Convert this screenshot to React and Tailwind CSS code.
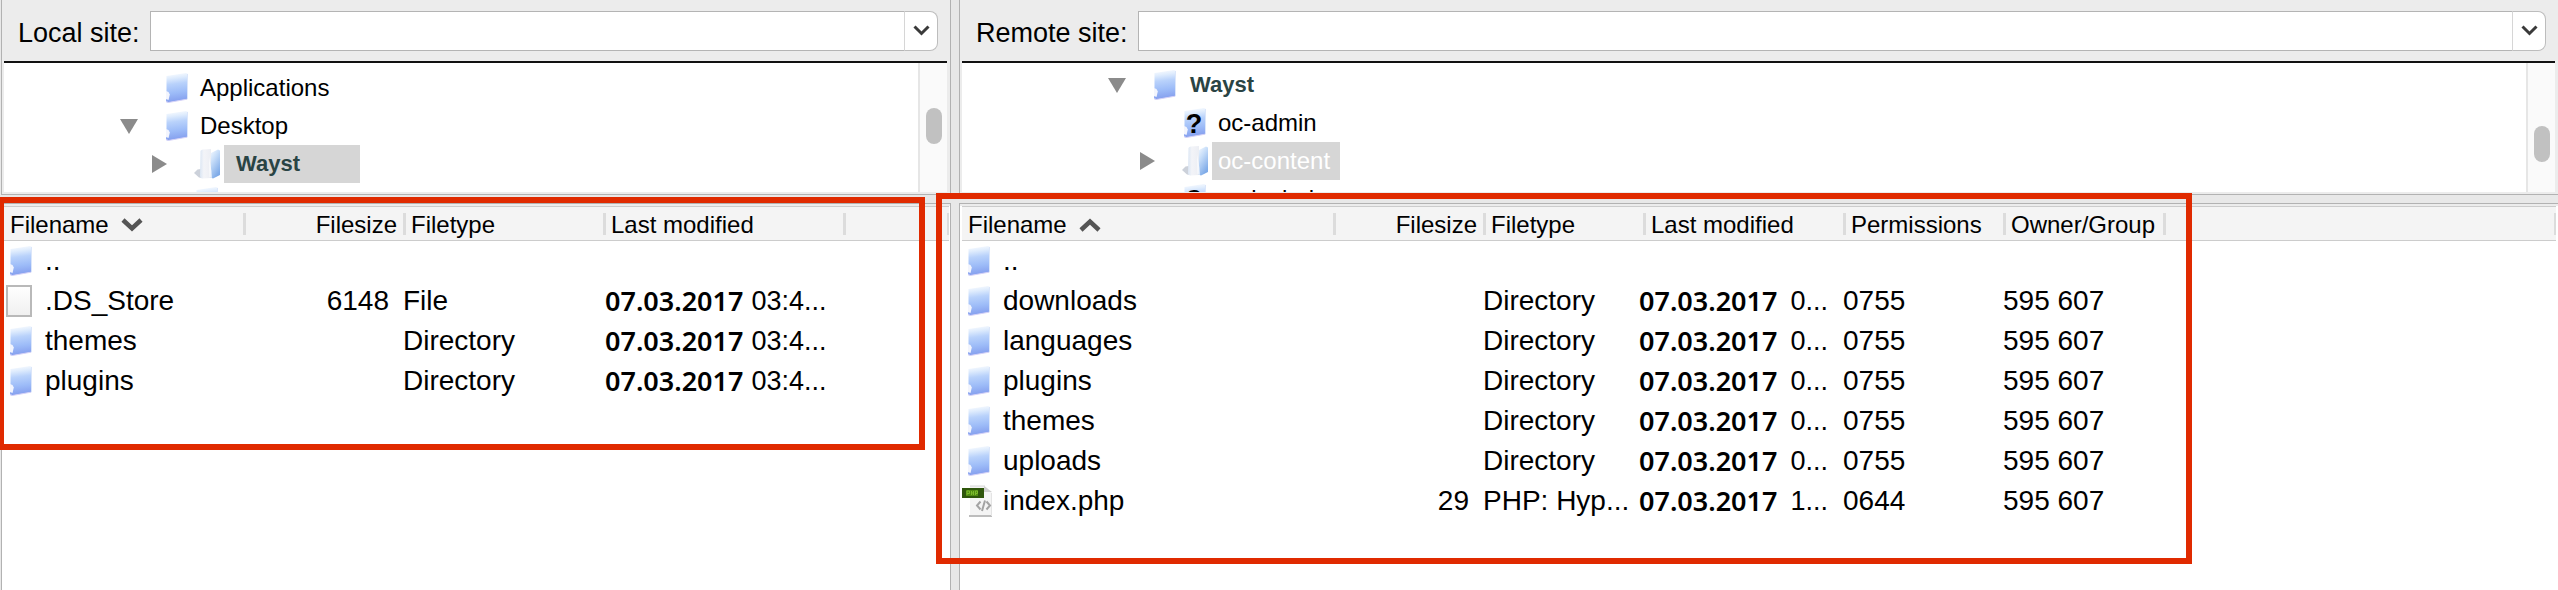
import React from "react";

function Gradients() {
  return (
    <svg className="absolute h-0 w-0" aria-hidden="true">
      <defs>
        <linearGradient id="folder" x1="0" y1="0" x2="0.1" y2="1">
          <stop offset="0" stopColor="#ffffff" />
          <stop offset="0.2" stopColor="#dfecfd" />
          <stop offset="0.4" stopColor="#b9d2fb" />
          <stop offset="0.7" stopColor="#9dbcf8" />
          <stop offset="1" stopColor="#859fee" />
        </linearGradient>
        <linearGradient id="openPage" x1="0" y1="0" x2="1" y2="0">
          <stop offset="0" stopColor="#dbe6f4" />
          <stop offset="0.35" stopColor="#f3f4f8" />
          <stop offset="1" stopColor="#eceef4" />
        </linearGradient>
        <linearGradient id="openCover" x1="0" y1="0" x2="0.5" y2="1">
          <stop offset="0" stopColor="#f6faff" />
          <stop offset="0.4" stopColor="#c8def9" />
          <stop offset="1" stopColor="#7fabe8" />
        </linearGradient>
        <linearGradient id="blankFile" x1="0" y1="0" x2="0" y2="1">
          <stop offset="0" stopColor="#ffffff" />
          <stop offset="1" stopColor="#f0f0f0" />
        </linearGradient>
      </defs>
    </svg>
  );
}

function FolderShape() {
  return (
    <>
      <path d="M0.5 3 L20 0 L22 1 V26 L2 29.5 L0 29 L0.5 17 Z" fill="url(#folder)" />
      <path d="M0 18 L2.5 19 L3.8 21.5 L2.5 27 L0 26 Z" fill="#f3f5fd" />
      <path d="M0 28.5 L2.5 29.5 L21 26.2" fill="none" stroke="#d5d2f7" strokeWidth="1" />
      <path d="M21.5 1 V26" stroke="#dbe6fa" strokeWidth="1" />
    </>
  );
}

function FolderIcon() {
  return (
    <svg className="h-[30px] w-[22px] shrink-0" viewBox="0 0 22 30" aria-hidden="true">
      <FolderShape />
    </svg>
  );
}

function UnknownFolderIcon() {
  return (
    <svg className="h-[30px] w-[22px] shrink-0" viewBox="0 0 22 30" aria-hidden="true">
      <FolderShape />
      <text x="10" y="25" textAnchor="middle" fontSize="27" fontWeight="700" fontFamily="Liberation Sans, sans-serif">
        ?
      </text>
    </svg>
  );
}

function OpenFolderIcon() {
  return (
    <svg className="-ml-[2px] h-[30px] w-[26px] shrink-0" viewBox="0 0 26 30" aria-hidden="true">
      <path d="M0 24 L3.5 20.5 L7 20 L8 29 L5 28.5 Z" fill="#ccd1da" />
      <path d="M6.5 2 Q7 0.5 9 0.5 L17 0 V29 L8 29.5 Q6 29 6 27 Z" fill="url(#openPage)" />
      <path d="M17 4 L24 0.5 L26 1.5 V26 L19 29.5 L16.5 28.5 Z" fill="url(#openCover)" />
      <path d="M15 8 L17.5 22 L18 29 L15.5 28 Z" fill="#ffffff" opacity="0.7" />
    </svg>
  );
}

function BlankFileIcon() {
  return (
    <svg className="h-[32px] w-[26px] shrink-0" viewBox="0 0 26 32" aria-hidden="true">
      <rect x="1" y="1" width="24" height="30" fill="url(#blankFile)" stroke="#b9b9b9" strokeWidth="2" />
    </svg>
  );
}

function PhpFileIcon() {
  return (
    <svg className="h-[32px] w-[31px] shrink-0" viewBox="0 0 31 32" aria-hidden="true">
      <path d="M8 1 H23 L30 8 V31 H8 Z" fill="#f4f4f4" />
      <path d="M8 1 H23" stroke="#d8d8d8" />
      <path d="M22 1 V7 H30 Z" fill="#d0d0d0" />
      <path d="M7 31 H30" stroke="#bdbdbd" strokeWidth="2" />
      <path d="M29.5 8 V31" stroke="#e4e4e4" />
      <rect x="0" y="3" width="22" height="10" fill="#2f560c" />
      <rect x="4" y="5" width="12" height="6" fill="#4f8a12" />
      <path d="M5 10 V6 H7.500 V8.500 H5 M9.500 6 V10 M11.500 6 V10 M9.500 8 H11.500 M13.500 10 V6 H15.500 V8.500 H13.500" fill="none" stroke="#7cba2c" />
      <path
        d="M18.500 16.500 L15 20.500 L18.500 24.500 M24.500 16.500 L28 20.500 L24.500 24.500 M23 15.500 L20 26"
        fill="none"
        stroke="#a3a3a3"
        strokeWidth="2"
      />
    </svg>
  );
}

const icons = {
  folder: { Icon: FolderIcon, pad: "pl-[6px]" },
  file: { Icon: BlankFileIcon, pad: "pl-[2px]" },
  php: { Icon: PhpFileIcon, pad: "pl-0" },
};

const treeIcons = { folder: FolderIcon, unknown: UnknownFolderIcon, open: OpenFolderIcon };

function Toggle({ state, name }) {
  if (!state) return null;
  return (
    <button type="button" aria-label={`Toggle ${name}`} className="flex h-[18px] w-[20px] items-center">
      {state === "down" ? (
        <svg className="h-[15px] w-[18px]" viewBox="0 0 18 15" aria-hidden="true">
          <path d="M0 0 H18 L9 15 Z" fill="#8b8b8b" />
        </svg>
      ) : (
        <svg className="ml-[2px] h-[18px] w-[15px]" viewBox="0 0 15 18" aria-hidden="true">
          <path d="M0 0 V18 L15 9 Z" fill="#8b8b8b" />
        </svg>
      )}
    </button>
  );
}

function TreeRow({ node }) {
  const Icon = treeIcons[node.icon];
  return (
    <li className={`flex h-[38px] shrink-0 items-center ${node.indent}`}>
      <div className="flex w-[46px] shrink-0 items-center">
        <Toggle state={node.toggle} name={node.name} />
      </div>
      <div className="flex w-[28px] shrink-0 items-center">
        <Icon />
      </div>
      {node.name && (
        <span className={`h-[38px] whitespace-nowrap leading-[38px] ${node.label}`}>{node.name}</span>
      )}
    </li>
  );
}

function SiteBar({ id, label }) {
  return (
    <div className="flex h-[61px] items-center pl-[14px] pr-[9px]">
      <label htmlFor={id} className="mr-[10px] whitespace-nowrap pt-[5px] text-[27px] leading-[32px]">
        {label}
      </label>
      <input
        id={id}
        type="text"
        className="h-[40px] min-w-0 flex-1 border border-[#b4b4b4] bg-white px-2 text-[24px] outline-none"
      />
      <button
        type="button"
        aria-label={`${label} history`}
        className="-ml-px flex h-[40px] w-[34px] items-center justify-center rounded-r-[8px] border border-[#bdbdbd] border-l-[#d6d6d6] bg-white"
      >
        <svg className="h-[11px] w-[17px]" viewBox="0 0 17 11" aria-hidden="true">
          <path d="M1.5 1.5 L8.5 8.5 L15.5 1.5" fill="none" stroke="#3a3a3a" strokeWidth="3" />
        </svg>
      </button>
    </div>
  );
}

function Tree({ nodes, top, thumb, label }) {
  return (
    <div className="flex h-[131px] overflow-hidden border-t-2 border-[#111111] bg-white">
      <ul aria-label={label} className={`flex min-w-0 flex-1 flex-col overflow-hidden text-[24px] ${top}`}>
        {nodes.map((node, i) => (
          <TreeRow key={i} node={node} />
        ))}
      </ul>
      <div className="w-[29px] border-l-2 border-[#e6e6e6] bg-[#fafafa] pl-[6px]">
        <div className={`h-[36px] w-[16px] rounded-full bg-[#c1c1c1] ${thumb}`} />
      </div>
    </div>
  );
}

function SortMark({ direction }) {
  return (
    <svg className="ml-[12px] h-[14px] w-[22px]" viewBox="0 0 22 14" aria-hidden="true">
      <path
        d={direction === "down" ? "M2 2 L11 10.5 L20 2" : "M2 12 L11 3.5 L20 12"}
        fill="none"
        stroke="#555555"
        strokeWidth="4.5"
      />
    </svg>
  );
}

function FileTable({ columns, rows, sort, label, dateClass }) {
  return (
    <table aria-label={label} className="w-full table-fixed border-collapse text-left">
      <colgroup>
        {columns.map((c) => (
          <col key={c.name} className={c.width} />
        ))}
        <col />
      </colgroup>
      <thead>
        <tr className="h-[34px] border-y border-[#cccccc] bg-[#f4f4f4] text-[24px]">
          {columns.map((c, i) => (
            <th key={c.name} scope="col" className="p-0 font-normal">
              <div
                className={`flex h-[22px] items-center whitespace-nowrap pt-[2px] ${
                  i === 0 ? "pl-[6px]" : "border-l-[3px] border-[#dcdcdc] pl-[5px]"
                } ${c.right ? "justify-end pr-[6px]" : ""}`}
              >
                {c.name}
                {i === 0 && <SortMark direction={sort} />}
              </div>
            </th>
          ))}
          <td className="p-0">
            <div className="h-[22px] border-l-[3px] border-r-2 border-[#dcdcdc]" />
          </td>
        </tr>
      </thead>
      <tbody className="text-[28px] leading-[40px]">
        {rows.map((row) => {
          const { Icon, pad } = icons[row.icon];
          return (
            <tr key={row.name} className="h-[40px]">
              <td className="p-0">
                <div className="flex h-[40px] items-center">
                  <span className={`flex w-[41px] shrink-0 items-center ${pad}`}>
                    <Icon />
                  </span>
                  {row.name}
                </div>
              </td>
              <td className="p-0 pr-[14px] text-right">{row.size}</td>
              <td className="whitespace-nowrap p-0">{row.type}</td>
              <td className="whitespace-nowrap p-0 text-[27px]">
                {row.time && (
                  <div className={`flex ${dateClass}`}>
                    <span className="font-['Noto_Sans',sans-serif] font-semibold">07.03.2017</span>
                    <span>{row.time}</span>
                  </div>
                )}
              </td>
              {columns.length > 4 && <td className="p-0">{row.permissions}</td>}
              {columns.length > 4 && <td className="p-0">{row.owner}</td>}
              <td className="p-0" />
            </tr>
          );
        })}
      </tbody>
    </table>
  );
}

const localTree = [
  { name: "Applications", icon: "folder", indent: "pl-[116px]", label: "pl-[6px]" },
  { name: "Desktop", icon: "folder", indent: "pl-[116px]", label: "pl-[6px]", toggle: "down" },
  {
    name: "Wayst",
    icon: "open",
    indent: "pl-[146px]",
    label: "w-[136px] bg-[#d6d6d6] pl-[12px] text-[22px] font-bold text-[#2a4444]",
    toggle: "right",
  },
  { icon: "folder", indent: "pl-[146px]" },
];

const remoteTree = [
  {
    name: "Wayst",
    icon: "folder",
    indent: "pl-[146px]",
    label: "pl-[8px] text-[22px] font-bold text-[#2a4444]",
    toggle: "down",
  },
  { name: "oc-admin", icon: "unknown", indent: "pl-[176px]", label: "pl-[6px]" },
  {
    name: "oc-content",
    icon: "open",
    indent: "pl-[176px]",
    label: "bg-[#d6d6d6] pl-[6px] pr-[10px] text-white",
    toggle: "right",
  },
  { name: "oc-includes", icon: "unknown", indent: "pl-[176px]", label: "pl-[6px]" },
];

const localColumns = [
  { name: "Filename", width: "w-[239px]" },
  { name: "Filesize", width: "w-[160px]", right: true },
  { name: "Filetype", width: "w-[200px]" },
  { name: "Last modified", width: "w-[240px]" },
];

const remoteColumns = [
  { name: "Filename", width: "w-[371px]" },
  { name: "Filesize", width: "w-[150px]", right: true },
  { name: "Filetype", width: "w-[160px]" },
  { name: "Last modified", width: "w-[200px]" },
  { name: "Permissions", width: "w-[160px]" },
  { name: "Owner/Group", width: "w-[160px]" },
];

const localRows = [
  { name: "..", icon: "folder" },
  { name: ".DS_Store", icon: "file", size: "6148", type: "File", time: "03:4..." },
  { name: "themes", icon: "folder", type: "Directory", time: "03:4..." },
  { name: "plugins", icon: "folder", type: "Directory", time: "03:4..." },
];

const remoteRows = [
  { name: "..", icon: "folder" },
  ...["downloads", "languages", "plugins", "themes", "uploads"].map((name) => ({
    name,
    icon: "folder",
    type: "Directory",
    time: "0...",
    permissions: "0755",
    owner: "595 607",
  })),
  {
    name: "index.php",
    icon: "php",
    size: "29",
    type: "PHP: Hyp...",
    time: "1...",
    permissions: "0644",
    owner: "595 607",
  },
];

export default function App() {
  return (
    <main className="relative grid min-h-screen grid-cols-[951fr_1599fr] gap-x-[8px] overflow-hidden bg-[#e8e8e8] font-['Liberation_Sans',Arial,sans-serif] text-black">
      <Gradients />
      <section aria-label="Local" className="relative flex min-w-0 flex-col gap-[8px] pl-px">
        <div className="border-x border-b border-[#b2b2b2] bg-[#ececec] pb-[2px] pl-[2px] pr-[3px]">
          <SiteBar id="local-site" label="Local site:" />
          <Tree nodes={localTree} top="pt-[6px]" thumb="mt-[45px]" label="Local folders" />
        </div>
        <div className="flex-1 border-x border-t border-[#b2b2b2] bg-white">
          <div className="bg-[#ececec] pt-[2px]" />
          <div className="pl-[2px] pr-px">
            <FileTable
              columns={localColumns}
              rows={localRows}
              sort="down"
              label="Local files"
              dateClass="gap-[8px] pl-[2px]"
            />
          </div>
        </div>
        <div className="pointer-events-none absolute -left-[2px] top-[197px] h-[253px] w-[927px] border-[6px] border-[#e02a00]" />
      </section>
      <section aria-label="Remote" className="relative flex min-w-0 flex-col gap-[8px]">
        <div className="border-b border-l border-[#b2b2b2] bg-[#ececec] pb-[2px] pl-[2px] pr-[3px]">
          <SiteBar id="remote-site" label="Remote site:" />
          <Tree nodes={remoteTree} top="pt-[3px]" thumb="mt-[63px]" label="Remote folders" />
        </div>
        <div className="flex-1 border-l border-t border-[#b2b2b2] bg-white">
          <div className="bg-[#ececec] pt-[2px]" />
          <div className="pl-[2px] pr-[2px]">
            <FileTable
              columns={remoteColumns}
              rows={remoteRows}
              sort="up"
              label="Remote files"
              dateClass="-ml-[4px] gap-[13px]"
            />
          </div>
        </div>
        <div className="pointer-events-none absolute -left-[23px] top-[193px] h-[371px] w-[1256px] border-[6px] border-[#e02a00]" />
      </section>
    </main>
  );
}
